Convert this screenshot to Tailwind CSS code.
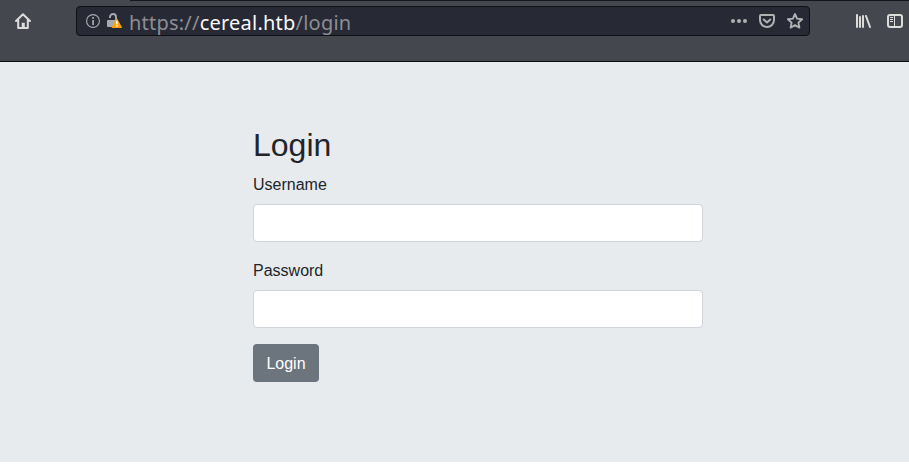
<!DOCTYPE html>
<html lang="en">
<head>
<meta charset="utf-8">
<title>Login</title>
<script src="https://cdn.jsdelivr.net/npm/@tailwindcss/browser@4"></script>
</head>
<body class="flex h-[465px] w-[909px] flex-col overflow-hidden bg-white font-['Liberation_Sans',sans-serif]">
<header class="flex h-[62px] shrink-0 flex-col border-b border-[#0c0c0d] bg-[#44474d]">
  <div class="ml-[130px] h-px shrink-0 bg-[#15161c]"></div>
  <div class="mt-[5px] flex h-[30px] items-center">
    <svg class="ml-[15px] size-4 shrink-0" viewBox="0 0 16 16" fill="none" stroke="#dcdcda" stroke-width="2" stroke-linecap="round" stroke-linejoin="round"><path d="M1 8 8 1.200 15 8M3.200 7v8h9.600V7"/><path d="M7.500 14v-3.500h1.500V14" stroke-width="1.600" stroke-linejoin="miter"/></svg>
    <div class="ml-[45px] flex h-[30px] w-[734px] shrink-0 items-center rounded-[4px] border border-[#0f1015] bg-[#272935]">
      <svg class="ml-[9px] size-[14px] shrink-0" viewBox="0 0 14 14"><circle cx="7" cy="7" r="6.400" fill="none" stroke="#a9aab0" stroke-width="1.100"/><path d="M6.200 6h1.700v5H6.200zM6.200 3h1.700v1.700H6.200z" fill="#a9aab0"/></svg>
      <svg class="ml-[7px] size-4 shrink-0" viewBox="0 0 16 16"><path d="M3 5V4a3 3 0 0 1 6 0v3" fill="none" stroke="#a9aab0" stroke-width="1.900"/><path d="M0 8q0-1 1-1h8.500L5.300 14H1q-1 0-1-1z" fill="#a9aab0"/><path d="M9.800 6.300 14.300 14.300H5.300z" fill="#ffa40c" stroke="#ffa40c" stroke-width="1.200" stroke-linejoin="round"/><path d="M9.100 7.800h1.500v3.500H9.100zM9.100 12.200h1.500v1.400H9.100z" fill="#fff"/></svg>
      <div class="ml-1.5 w-[600px] pt-[3px] font-['Noto_Sans',sans-serif] text-[20px] leading-7 tracking-[0.220px] whitespace-nowrap text-[#8d8e94]">https://<span class="text-[#f9f9fa]">cereal.htb</span>/login</div>
      <svg class="h-4 w-[18px] shrink-0" viewBox="0 0 18 16" fill="#b1b1b3"><circle cx="4" cy="8" r="2"/><circle cx="10" cy="8" r="2"/><circle cx="16" cy="8" r="2"/></svg>
      <svg class="ml-3 size-4 shrink-0" viewBox="0 0 16 16" fill="none" stroke="#b1b1b3" stroke-width="2" stroke-linecap="round" stroke-linejoin="round"><path d="M2 2h12q1 0 1 1v4a7 7 0 0 1-14 0V3q0-1 1-1z"/><path d="m4.700 6.500 3.300 3 3.300-3"/></svg>
      <svg class="ml-3 size-4 shrink-0" viewBox="0 0 16 16" fill="none" stroke="#b1b1b3" stroke-width="1.900" stroke-linejoin="round"><path d="m8 1 2.100 4.600 5 .600-3.700 3.400 1 5L8 12.200l-4.400 2.400 1-5L.900 6.200l5-.600z"/></svg>
    </div>
    <svg class="ml-[45px] size-4 shrink-0" viewBox="0 0 16 16" stroke="#dcdcda" stroke-width="2" stroke-linecap="round"><path d="M2 2v12M5 4v10M8 3v11M11 3l4 11"/></svg>
    <svg class="ml-4 size-4 shrink-0" viewBox="0 0 16 16" fill="none" stroke="#dcdcda"><rect x="1" y="2" width="14" height="12" rx="2" stroke-width="2"/><path d="M7.500 2v12" stroke-width="1"/><path d="M3 4.500h3M3 6.500h3M3 8.500h3"/></svg>
  </div>
</header>
<main class="h-[400px] shrink-0 bg-[#e8ebee] pt-16 pl-[253px] text-[#212529]">
  <form class="w-[450px]">
    <h2 class="mb-2 text-[32px] leading-[39px]">Login</h2>
    <label for="username" class="mb-[7px] block text-base leading-6">Username</label>
    <input id="username" type="text" class="mb-[17px] block h-[38px] w-full rounded border border-[#ced4da] bg-white px-3">
    <label for="password" class="mb-[7px] block text-base leading-6">Password</label>
    <input id="password" type="password" class="mb-4 block h-[38px] w-full rounded border border-[#ced4da] bg-white px-3">
    <button type="button" class="block h-[38px] w-[66px] rounded bg-[#6c757d] pt-0.5 text-base leading-6 text-white">Login</button>
  </form>
</main>
</body>
</html>
